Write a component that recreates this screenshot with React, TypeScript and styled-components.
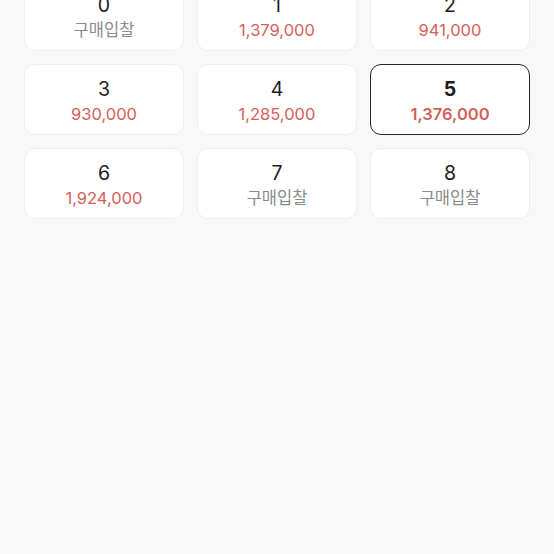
import React from "react";
import styled, { createGlobalStyle } from "styled-components";

const Global = createGlobalStyle`
  html, body { margin: 0; padding: 0; background: #f8f8f8; }
  body { font-family: Inter, "Noto Sans", "Noto Sans CJK KR", sans-serif; }
`;

const Page = styled.div`
  width: 554px;
  height: 554px;
  overflow: hidden;
  background: #f8f8f8;
`;

const Grid = styled.div`
  display: grid;
  grid-template-columns: repeat(3, 160px);
  column-gap: 13px;
  row-gap: 13px;
  padding: 0 24px;
  margin-top: -20px;
`;

const Card = styled.div<{ $selected?: boolean }>`
  box-sizing: border-box;
  height: 71px;
  background: #fff;
  border-radius: 11px;
  border: ${(p) => (p.$selected ? "1.6px solid #262626" : "1px solid #efefef")};
  display: flex;
  flex-direction: column;
  align-items: center;
  justify-content: center;
  gap: 3px;
  padding-top: 1px;
`;

const Size = styled.div<{ $selected?: boolean }>`
  font-size: 19.5px;
  line-height: 24px;
  color: #1c1c1c;
  font-weight: ${(p) => (p.$selected ? 700 : 400)};
`;

const Price = styled.div<{ $empty?: boolean; $selected?: boolean }>`
  font-size: 16.5px;
  line-height: 20px;
  color: ${(p) => (p.$empty ? "#8a8a8a" : "#d4605a")};
  font-weight: ${(p) => (p.$selected ? 600 : 400)};
`;

const items = [
  { size: "0", price: null },
  { size: "1", price: "1,379,000" },
  { size: "2", price: "941,000" },
  { size: "3", price: "930,000" },
  { size: "4", price: "1,285,000" },
  { size: "5", price: "1,376,000", selected: true },
  { size: "6", price: "1,924,000" },
  { size: "7", price: null },
  { size: "8", price: null },
];

export default function App() {
  return (
    <Page>
      <Global />
      <Grid>
        {items.map((it) => (
          <Card key={it.size} $selected={it.selected}>
            <Size $selected={it.selected}>{it.size}</Size>
            <Price $empty={!it.price} $selected={it.selected}>
              {it.price ?? "구매입찰"}
            </Price>
          </Card>
        ))}
      </Grid>
    </Page>
  );
}
